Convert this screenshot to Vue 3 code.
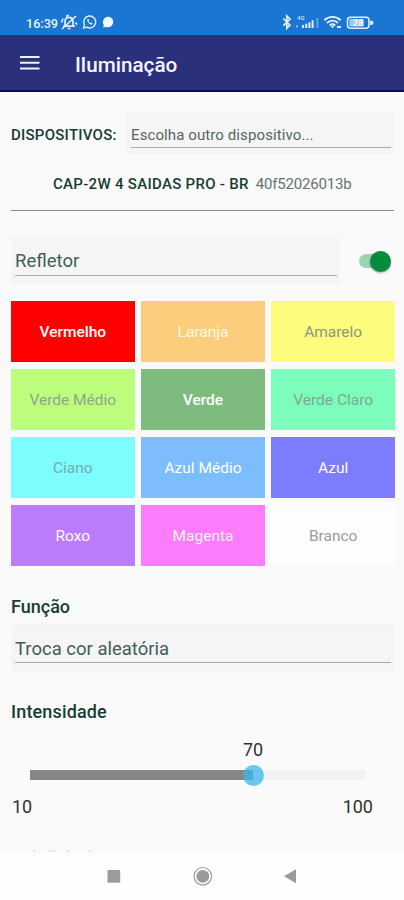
<script setup>
import { ref } from 'vue'

const colors = [
  { name: 'Vermelho', bg: '#ff0000', fg: '#ffffff', strong: true },
  { name: 'Laranja', bg: '#fbcd7c', fg: '#fff8e8' },
  { name: 'Amarelo', bg: '#fcfd7c', fg: '#929482' },
  { name: 'Verde Médio', bg: '#bcfd7c', fg: '#8fa58c' },
  { name: 'Verde', bg: '#7dbc7e', fg: '#ffffff', strong: true },
  { name: 'Verde Claro', bg: '#7dfdbc', fg: '#7da797' },
  { name: 'Ciano', bg: '#7dfdfd', fg: '#78aab0' },
  { name: 'Azul Médio', bg: '#7dbcfd', fg: '#ffffff' },
  { name: 'Azul', bg: '#7c7cfc', fg: '#ffffff' },
  { name: 'Roxo', bg: '#bb7cfd', fg: '#ffffff' },
  { name: 'Magenta', bg: '#fc7dfc', fg: '#fff0ff' },
  { name: 'Branco', bg: '#fdfdfd', fg: '#989c9c' },
]
const intensity = ref(70)
const min = 10
const max = 100
</script>

<template>
  <div class="screen">
    <header class="status">
      <span class="clock">16:39</span>
      <svg class="left-icons" width="58" height="18" viewBox="0 0 58 18" fill="none" stroke="#e1effb">
        <g stroke-width="1.7">
          <path d="M5 13V8.5C5 5.8 6.5 4.3 9 4.3S13 5.8 13 8.5V13M3.2 13.2H15M7.5 15.5H10.5" />
          <path d="M2 16L16 3M1.5 9.5L3 5.5M15.3 9.5L17 11.5M6 3.2L9 2.2" />
        </g>
        <path d="M23.6 15.1L24.5 11.9A6 6 0 1 1 26.8 14.2Z" stroke-width="1.4" />
        <path d="M27.2 6.5C27.2 9.2 29.4 11.5 32 11.7L32.6 10.2L30.9 9.4L30.2 10C29.3 9.6 28.8 8.9 28.6 8.3L29.2 7.6L28.6 6Z" fill="#e1effb" stroke="none" />
        <path d="M43 14.6L43.8 12A5.2 5.2 0 1 1 46.5 14Z" fill="#f2f8ff" stroke="none" />
      </svg>
      <svg class="right-icons" width="96" height="20" viewBox="0 0 96 20" fill="none" stroke="#e3f0fc">
        <path d="M2.4 6.5L9 13.2L5.8 16.2V4L9 7L2.4 13.7" stroke-width="1.7" />
        <text x="16" y="8" font-size="6" font-weight="700" fill="#b9dbf7" stroke="none">4G</text>
        <g fill="#e3f0fc" stroke="none">
          <path d="M15 13h2v2.5h-2z" opacity=".45" />
          <path d="M21 13h2v3h-2zM24.2 11.8h2V16h-2zM27.4 10.2h2V16h-2zM30.6 8.2h2V16h-2z" />
          <path d="M35.5 6h1.8v10h-1.8z" opacity=".4" />
        </g>
        <path d="M43.3 8.2C48 3.8 55 3.8 59.7 8.2M46 11C49.3 8 53.7 8 57 11M48.7 13.4C50.4 12 52.6 12 54.3 13.4" stroke-width="1.9" />
        <path d="M49.6 14.1H53.4L51.5 16.3Z" fill="#e3f0fc" stroke="none" />
        <path d="M56 15H60" stroke-width="2" />
        <rect x="66.5" y="5.2" width="21.5" height="11" rx="3" stroke-width="1.5" />
        <rect x="68.3" y="7" width="14.5" height="7.4" rx="1" fill="#9bcaf2" stroke="none" />
        <path d="M89.2 8.4Q92.4 8.4 92.4 10.7T89.2 13Z" fill="#e3f0fc" stroke="none" />
        <text x="77.2" y="14" text-anchor="middle" font-size="9" font-weight="700" fill="#f3f9ff" stroke="none">28</text>
      </svg>
    </header>

    <div class="appbar">
      <svg width="20" height="16" viewBox="0 0 20 16" stroke="#f1f1fb" stroke-width="2">
        <path d="M0 2H19.5M0 7.8H19.5M0 13.6H19.5" />
      </svg>
      <h1>Iluminação</h1>
    </div>

    <main>
      <div class="device-row">
        <span class="device-label">DISPOSITIVOS:</span>
        <div class="picker small"><span>Escolha outro dispositivo...</span></div>
      </div>
      <div class="device">
        <b>CAP-2W 4 SAIDAS PRO - BR</b><span>40f52026013b</span>
      </div>
      <div class="reflector-row">
        <div class="picker reflector"><span>Refletor</span></div>
        <div class="switch"><i></i></div>
      </div>
      <div class="grid">
        <button
          v-for="c in colors"
          :key="c.name"
          :class="{ strong: c.strong }"
          :style="{ background: c.bg, color: c.fg }"
        >{{ c.name }}</button>
      </div>
      <h2 class="fn">Função</h2>
      <div class="picker random"><span>Troca cor aleatória</span></div>
      <h2 class="int">Intensidade</h2>
      <div class="slider">
        <div class="value-row"><span>{{ intensity }}</span></div>
        <div class="track">
          <div class="fill"></div>
          <div class="thumb"></div>
        </div>
        <div class="range"><span>{{ min }}</span><span>{{ max }}</span></div>
      </div>
      <div class="peek"><i></i><i></i><i></i><i></i></div>
    </main>

    <nav>
      <svg width="404" height="47" viewBox="0 0 404 47">
        <rect x="107.5" y="17" width="12.7" height="12.7" fill="#9b9b9b" />
        <circle cx="202.8" cy="23.3" r="8.8" fill="none" stroke="#9a9a9a" stroke-width="1.2" />
        <circle cx="202.8" cy="23.3" r="6.4" fill="#9b9b9b" />
        <path d="M284 23.2L296 16.2V30.2Z" fill="#9b9b9b" />
      </svg>
    </nav>
  </div>
</template>

<style>
body { margin: 0; background: #fafafa; }
</style>

<style scoped>
.screen {
  width: 404px;
  height: 900px;
  display: flex;
  flex-direction: column;
  overflow: hidden;
  background: #fafafa;
  font-family: Roboto, "Liberation Sans", sans-serif;
  color: #173c36;
}
.screen * { box-sizing: border-box; }
svg { display: block; flex: none; }
.status {
  height: 35px;
  flex: none;
  display: flex;
  align-items: flex-start;
  background: #1976d2;
  padding: 12px 27px 0;
}
.clock { width: 33px; margin-left: -1px; margin-right: 1px; font-size: 12.6px; font-weight: 500; line-height: 23px; color: #e8f3fd; white-space: nowrap; }
.left-icons { margin-top: 1px; }
.right-icons { margin-left: 163px; }
.appbar {
  height: 57px;
  flex: none;
  display: flex;
  align-items: center;
  background: #2b307c;
  border-bottom: 2px solid #07077c;
  padding: 1px 0 0 20px;
}
h1 { margin: 4px 0 0 35px; font-size: 20.7px; line-height: 28px; font-weight: 500; color: #f4f4fc; }
main { flex: 1; min-height: 0; padding: 20px 9px 0 11px; display: flex; flex-direction: column; overflow: hidden; }
.device-row { display: flex; height: 45px; }
.device-label { width: 115px; font-size: 15px; font-weight: 500; letter-spacing: .25px; line-height: 46px; white-space: nowrap; }
.picker { background: #f5f5f5; flex: none; display: flex; white-space: nowrap; color: #425d58; }
.picker span { flex: 1; border-bottom: 1.5px solid #a6a9a9; }
.small { width: 268px; height: 42px; padding: 0 3px 6px 5px; font-size: 15px; letter-spacing: .1px; color: #566663; }
.small span { line-height: 46px; }
.device {
  width: 383px;
  height: 54px;
  flex: none;
  border-bottom: 1px solid #858989;
  padding-left: 42px;
  font-size: 15px;
  line-height: 54px;
  white-space: nowrap;
}
.device b { font-weight: 500; letter-spacing: .3px; }
.device span { margin-left: 7px; color: #657270; letter-spacing: -.2px; }
.reflector-row { display: flex; align-items: center; margin-top: 26px; height: 47px; flex: none; }
.reflector { width: 329px; height: 47px; padding: 0 3px 8px 4px; font-size: 18.5px; }
.reflector span { line-height: 48px; }
.switch { width: 31px; height: 14px; margin: 1px 0 0 19px; border-radius: 7px; background: #9bd3ae; display: flex; align-items: center; justify-content: flex-end; }
.switch i { width: 21px; height: 21px; flex: none; border-radius: 50%; margin-right: -1px; background: #058c3c; box-shadow: 0 1px 2px #0005; }
.grid { display: grid; grid-template-columns: repeat(3, 123.6px); grid-auto-rows: 61.5px; gap: 6.6px; margin-top: 16.7px; flex: none; }
button { border: 0; padding: 1px 0 0; font: 400 15.5px Roboto, sans-serif; }
button.strong { font-weight: 500; }
h2 { margin: 0; font-size: 18px; font-weight: 500; line-height: 24px; flex: none; }
.fn { margin-top: 29px; }
.random { width: 383px; height: 47px; margin-top: 6px; padding: 0 3px 9px 4px; font-size: 18.5px; }
.random span { line-height: 49px; }
.int { margin-top: 28px; letter-spacing: .15px; }
.slider { flex: none; font-size: 18px; color: #303232; }
.value-row { width: 335px; margin-left: 19px; padding-left: 213px; height: 46px; line-height: 51px; }
.track { width: 335px; height: 10px; margin-left: 19px; background: #f2f2f2; display: flex; align-items: center; }
.fill { width: 66.7%; height: 10px; background: #868686; }
.thumb { width: 21px; height: 21px; border-radius: 50%; margin-left: -10.5px; background: #39b5e8bf; }
.range { width: 362px; padding-left: 1px; display: flex; justify-content: space-between; line-height: 24px; margin-top: 15px; }
.peek { display: flex; gap: 12px; padding-left: 23px; margin-top: 31px; flex: none; }
.peek i { width: 1px; height: 2px; background: #c9cccb; }
.peek i:nth-child(2) { width: 9px; opacity: .3; }
.peek i:nth-child(4) { margin-left: 8px; }
nav { height: 47px; flex: none; background: #fefefe; }
</style>
